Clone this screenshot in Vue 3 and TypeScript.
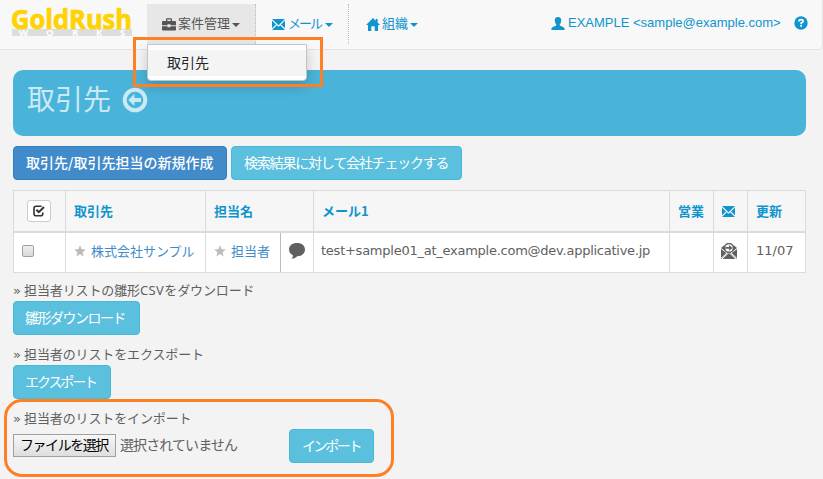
<script setup lang="ts">
interface Contact {
  company: string
  person: string
  mail: string
  sales: string
  updated: string
}

const contacts: Contact[] = [
  {
    company: '株式会社サンプル',
    person: '担当者',
    mail: 'test+sample01_at_example.com@dev.applicative.jp',
    sales: '',
    updated: '11/07',
  },
]

const columns: number[] = [52, 140, 75, 33, 356, 44, 34, 58]
</script>

<template>
  <div class="page">
    <nav class="navbar">
      <svg class="logo" width="124" height="34" viewBox="0 0 124 34">
        <rect x="2" y="23" width="120" height="7" fill="#dcdddd" />
        <text class="logo-name" x="1" y="23" textLength="121" lengthAdjust="spacingAndGlyphs">GoldRush</text>
        <text class="logo-sub" x="9 36 62 86 110" y="30">WORKS</text>
      </svg>
      <div class="nav-item nav-active">
        <svg width="14" height="13" viewBox="0 0 14 13" fill="#555">
          <path d="M4 3V1.5Q4 .3 5.2 .3H8.8Q10 .3 10 1.5V3H13Q14 3 14 4V7.2H8.5V6.3H5.5V7.2H0V4Q0 3 1 3ZM5.3 3H8.7V1.6H5.3ZM0 8.2H5.5V9.2H8.5V8.2H14V11.5Q14 12.4 13 12.4H1Q0 12.4 0 11.5Z" />
        </svg>
        <span class="nav-text">案件管理</span><i class="caret"></i>
        <div class="dropdown"><a class="dropdown-item">取引先</a></div>
        <div class="mark-menu"></div>
      </div>
      <div class="nav-item nav-mail">
        <svg width="13" height="11" viewBox="0 0 13 11" fill="#0f94ce">
          <path d="M0 0H13L6.5 6.2ZM0 1.6L4 5.4L0 9.3ZM13 1.6V9.3L9 5.4ZM0 11L4.8 6.2L6.5 7.8L8.2 6.2L13 11Z" />
        </svg>
        <span class="nav-text tight">メール</span><i class="caret"></i>
      </div>
      <div class="nav-item nav-org">
        <svg width="14" height="13" viewBox="0 0 14 13" fill="#0f94ce">
          <path d="M7 0L9.7 2.7V1H11.6V4.6L14 7H12V13H8.7V8.3H5.3V13H2V7H0Z" />
        </svg>
        <span class="nav-text">組織</span><i class="caret"></i>
      </div>
      <div class="account">
        <svg width="14" height="13" viewBox="0 0 14 13" fill="#0f94ce">
          <path d="M7 0Q10.2 0 10.2 3.4Q10.2 6 8.8 7.3V8.5L12.6 10.3Q13.7 10.9 13.7 13H.3Q.3 10.9 1.4 10.3L5.2 8.5V7.3Q3.8 6 3.8 3.4Q3.8 0 7 0Z" />
        </svg>
        <span class="account-name">EXAMPLE &lt;sample@example.com&gt;</span>
        <svg class="help" width="14" height="14" viewBox="0 0 14 14">
          <circle cx="7" cy="7" r="6.7" fill="#0f94ce" />
          <path d="M4.9 5.6Q4.9 3.7 7 3.7Q9.1 3.7 9.1 5.3Q9.1 6.4 7.1 7.1V8.2M7.1 9V10.7" fill="none" stroke="#fff" stroke-width="1.7" />
        </svg>
      </div>
    </nav>

    <main class="content">
      <header class="banner">
        <h1>取引先</h1>
        <svg width="26" height="26" viewBox="0 0 26 26">
          <circle cx="13" cy="13" r="10.3" fill="none" stroke="#c9e9f4" stroke-width="4" />
          <path d="M6.3 13L12.4 7V11H19V15H12.4V19Z" fill="#c9e9f4" />
        </svg>
      </header>

      <div class="actions">
        <button class="btn primary">取引先/取引先担当の新規作成</button>
        <button class="btn check">検索結果に対して会社チェックする</button>
      </div>

      <table class="contacts">
        <colgroup><col v-for="(w, i) in columns" :key="i" :style="{ width: w + 'px' }" /></colgroup>
        <thead>
          <tr>
            <th class="select">
              <span class="check-all">
                <svg width="12" height="12" viewBox="0 0 12 12" fill="none" stroke="#333">
                  <path d="M8.6 1.2H3Q1 1.2 1 3.2V8.8Q1 10.8 3 10.8H7.8Q9.8 10.8 9.8 8.8V7.5" stroke-width="1.6" />
                  <path d="M3.4 4.8L5.8 7.2L11 2" stroke-width="2" />
                </svg>
              </span>
            </th>
            <th>取引先</th>
            <th colspan="2">担当名</th>
            <th>メール1</th>
            <th>営業</th>
            <th>
              <svg width="13" height="11" viewBox="0 0 13 11" fill="#0f94ce">
                <path d="M0 0H13L6.5 6.2ZM0 1.6L4 5.4L0 9.3ZM13 1.6V9.3L9 5.4ZM0 11L4.8 6.2L6.5 7.8L8.2 6.2L13 11Z" />
              </svg>
            </th>
            <th>更新</th>
          </tr>
        </thead>
        <tbody>
          <tr v-for="c in contacts" :key="c.mail">
            <td><span class="box"></span></td>
            <td>
              <a class="link">
                <svg width="12" height="12" viewBox="0 0 12 12" fill="#bbb"><path d="M6 .3L7.6 4.2L11.8 4.5L8.6 7.2L9.6 11.4L6 9.1L2.4 11.4L3.4 7.2L.2 4.5L4.4 4.2Z" /></svg>
                {{ c.company }}
              </a>
            </td>
            <td>
              <a class="link">
                <svg width="12" height="12" viewBox="0 0 12 12" fill="#bbb"><path d="M6 .3L7.6 4.2L11.8 4.5L8.6 7.2L9.6 11.4L6 9.1L2.4 11.4L3.4 7.2L.2 4.5L4.4 4.2Z" /></svg>
                {{ c.person }}
              </a>
            </td>
            <td class="comment">
              <svg width="16" height="16" viewBox="0 0 16 16" fill="#606060"><path d="M8 0C12.8 0 16 2.7 16 6.6C16 10.7 12.6 13.2 8.2 13.2C6.8 14.8 5 15.6 2.8 15.8Q4 14.4 3.9 12.3C1.5 11.2 0 9.2 0 6.6C0 2.7 3.2 0 8 0Z" /></svg>
            </td>
            <td class="latin mail">{{ c.mail }}</td>
            <td>{{ c.sales }}</td>
            <td class="send">
              <svg width="16" height="16" viewBox="0 0 16 16">
                <path d="M0 5L3 2.6H13L16 5V16H0Z" fill="#606060" />
                <path d="M0 5.5L6 10L0 15.4M16 5.5L10 10L16 15.4M1 16L8 9.5L15 16" fill="none" stroke="#fff" stroke-width="1" />
                <circle cx="8" cy="4.9" r="4.4" fill="#fff" stroke="#606060" stroke-width="1.5" />
                <path d="M4.5 4H8V2L11.5 4.9L8 7.8V5.8H4.5Z" fill="#606060" />
              </svg>
            </td>
            <td class="latin">{{ c.updated }}</td>
          </tr>
        </tbody>
      </table>

      <section class="block">
        <p><span class="raquo">»</span>担当者リストの雛形<span class="csv">CSV</span>をダウンロード</p>
        <button class="btn download">雛形ダウンロード</button>
      </section>
      <section class="block">
        <p><span class="raquo">»</span>担当者のリストをエクスポート</p>
        <button class="btn export">エクスポート</button>
      </section>
      <section class="block">
        <div class="mark-import"></div>
        <p><span class="raquo">»</span>担当者のリストをインポート</p>
        <div class="upload">
          <button class="file">ファイルを選択</button>
          <span class="file-state">選択されていません</span>
          <button class="btn import">インポート</button>
        </div>
      </section>
    </main>
  </div>
</template>

<style>
body {
  background: #f3f3f3;
}
</style>

<style scoped>
* {
  box-sizing: border-box;
}
.page {
  width: 823px;
  height: 479px;
  overflow: hidden;
  background: #f3f3f3;
  color: #606060;
  font: 13px/18px "Noto Sans CJK JP", sans-serif;
}
svg {
  display: block;
  flex: none;
}
.navbar {
  display: flex;
  height: 50px;
  padding-top: 4px;
  background: #f8f8f8;
  border-right: 1px solid #e3e3e3;
  border-bottom: 1px solid #e3e3e3;
  border-radius: 0 0 5px 0;
}
.logo {
  margin: 2px 13px 0 10px;
  overflow: visible;
}
.logo-name {
  font: 700 26px "Open Sans", sans-serif;
  fill: #ffd200;
  stroke: #ffd200;
  stroke-width: 0.7px;
}
.logo-sub {
  font: 700 9.5px "Open Sans", sans-serif;
  fill: #fff;
}
.nav-item {
  position: relative;
  display: flex;
  align-items: center;
  height: 40px;
  color: #0f94ce;
  border-right: 1px dotted #bbb;
}
.nav-active {
  width: 109px;
  padding-left: 15px;
  color: #555;
  background: #e7e7e7;
}
.nav-mail {
  width: 93px;
  padding-left: 16px;
}
.nav-org {
  padding-left: 17px;
  border-right: 0;
}
.nav-text {
  margin: -2px 2px 0;
}
.tight {
  margin: -2px 4px 0 3px;
  letter-spacing: -2px;
}
.caret {
  margin-top: 2px;
  border: 4px solid transparent;
  border-top-color: currentColor;
  border-bottom: 0;
}
.dropdown {
  position: absolute;
  z-index: 2;
  top: 40px;
  left: 0;
  width: 160px;
  height: 37px;
  padding: 5px 0;
  background: #fff;
  border: 1px solid #c4c4c4;
  border-radius: 0 0 4px 4px;
  box-shadow: 0 6px 12px rgba(0, 0, 0, 0.18);
}
.dropdown-item {
  display: block;
  height: 26px;
  padding-left: 19px;
  font-size: 14px;
  line-height: 24px;
  color: #262626;
  background: #f4f4f4;
}
.mark-menu {
  position: absolute;
  z-index: 3;
  top: 33px;
  left: -14px;
  width: 190px;
  height: 50px;
  border: 3px solid #ff7f27;
}
.account {
  display: flex;
  align-items: center;
  height: 38px;
  margin-left: auto;
  margin-right: 14px;
  color: #0f94ce;
}
.account-name {
  width: 229px;
  padding-left: 3px;
  font: 13px/20px "Liberation Sans", sans-serif;
  white-space: nowrap;
}
.content {
  padding: 20px 17px 0 13px;
}
.banner {
  display: flex;
  gap: 11px;
  height: 66px;
  padding: 16px 14px 0;
  background: #4ab3d9;
  border-radius: 10px;
}
.banner svg {
  margin-top: 1px;
}
h1 {
  margin: 0;
  font-size: 28px;
  font-weight: 400;
  line-height: 24px;
  color: #c9e9f4;
}
.actions {
  display: flex;
  gap: 4px;
  margin: 10px 0;
}
.btn {
  display: block;
  height: 34px;
  padding: 0 0 2px 12px;
  font: 14px/30px "Noto Sans CJK JP", sans-serif;
  text-align: left;
  white-space: nowrap;
  color: #fff;
  background: #5bc0de;
  border: 1px solid #46b8da;
  border-radius: 4px;
}
.primary {
  width: 214px;
  padding-bottom: 3px;
  font-weight: 500;
  background: #428bca;
  border-color: #357ebd;
}
.check {
  width: 231px;
  letter-spacing: -1.2px;
}
.download {
  width: 127px;
  padding-left: 11px;
  letter-spacing: -1.5px;
}
.export {
  width: 98px;
  padding-left: 11px;
  letter-spacing: -2.1px;
}
.import {
  width: 85px;
  letter-spacing: -2.4px;
}
.contacts {
  width: 793px;
  table-layout: fixed;
  border-spacing: 0;
  border: solid #dbdbdb;
  border-width: 0 1px 1px 0;
}
th,
td {
  padding: 0 0 0 8px;
  text-align: left;
  white-space: nowrap;
  border-left: 1px solid #dbdbdb;
}
th {
  height: 43px;
  font-weight: 700;
  color: #0f94ce;
  background: #f6f6f6;
  border-top: 1px solid #dbdbdb;
  border-bottom: 2px solid #dbdbdb;
}
td {
  height: 39px;
  padding-bottom: 3px;
  background: #fff;
}
.select {
  padding-left: 13px;
}
.check-all {
  display: flex;
  align-items: center;
  justify-content: center;
  width: 24px;
  height: 22px;
  background: #fff;
  border: 1px solid #ccc;
  border-radius: 3px;
}
.box {
  display: block;
  width: 12px;
  height: 12px;
  background: linear-gradient(#eee, #dadada);
  border: 1px solid #a0a0a0;
  border-radius: 2px;
}
.link {
  display: flex;
  align-items: center;
  gap: 5px;
  line-height: 16px;
  color: #428bca;
  margin-top: -1px;
}
.comment {
  border-left-color: #bbb;
}
.send {
  padding-left: 7px;
}
.latin {
  font-family: "DejaVu Sans", sans-serif;
}
.mail {
  padding-left: 7px;
  letter-spacing: -0.25px;
}
.block {
  position: relative;
  height: 64px;
  padding-top: 8px;
}
.block p {
  height: 20px;
  margin: 0;
  letter-spacing: -0.12px;
}
.raquo {
  display: inline-block;
  width: 11px;
  font-family: "DejaVu Sans", sans-serif;
}
.csv {
  font-family: "Noto Sans", sans-serif;
  letter-spacing: 0.4px;
}
.upload {
  display: flex;
}
.file {
  width: 103px;
  height: 23px;
  margin-top: 5px;
  padding: 0 0 3px 6px;
  font: 14px/18px "Noto Sans CJK JP", sans-serif;
  letter-spacing: -1.45px;
  text-align: left;
  white-space: nowrap;
  color: #000;
  background: linear-gradient(#f7f7f7, #dedede);
  border: 1px solid #a0a0a0;
  border-radius: 0;
}
.file-state {
  width: 173px;
  padding: 6px 0 0 4px;
  font-size: 14px;
  letter-spacing: -0.9px;
}
.mark-import {
  position: absolute;
  top: -2px;
  left: -9px;
  width: 390px;
  height: 78px;
  border: 3px solid #ff7f27;
  border-radius: 18px;
}
</style>
